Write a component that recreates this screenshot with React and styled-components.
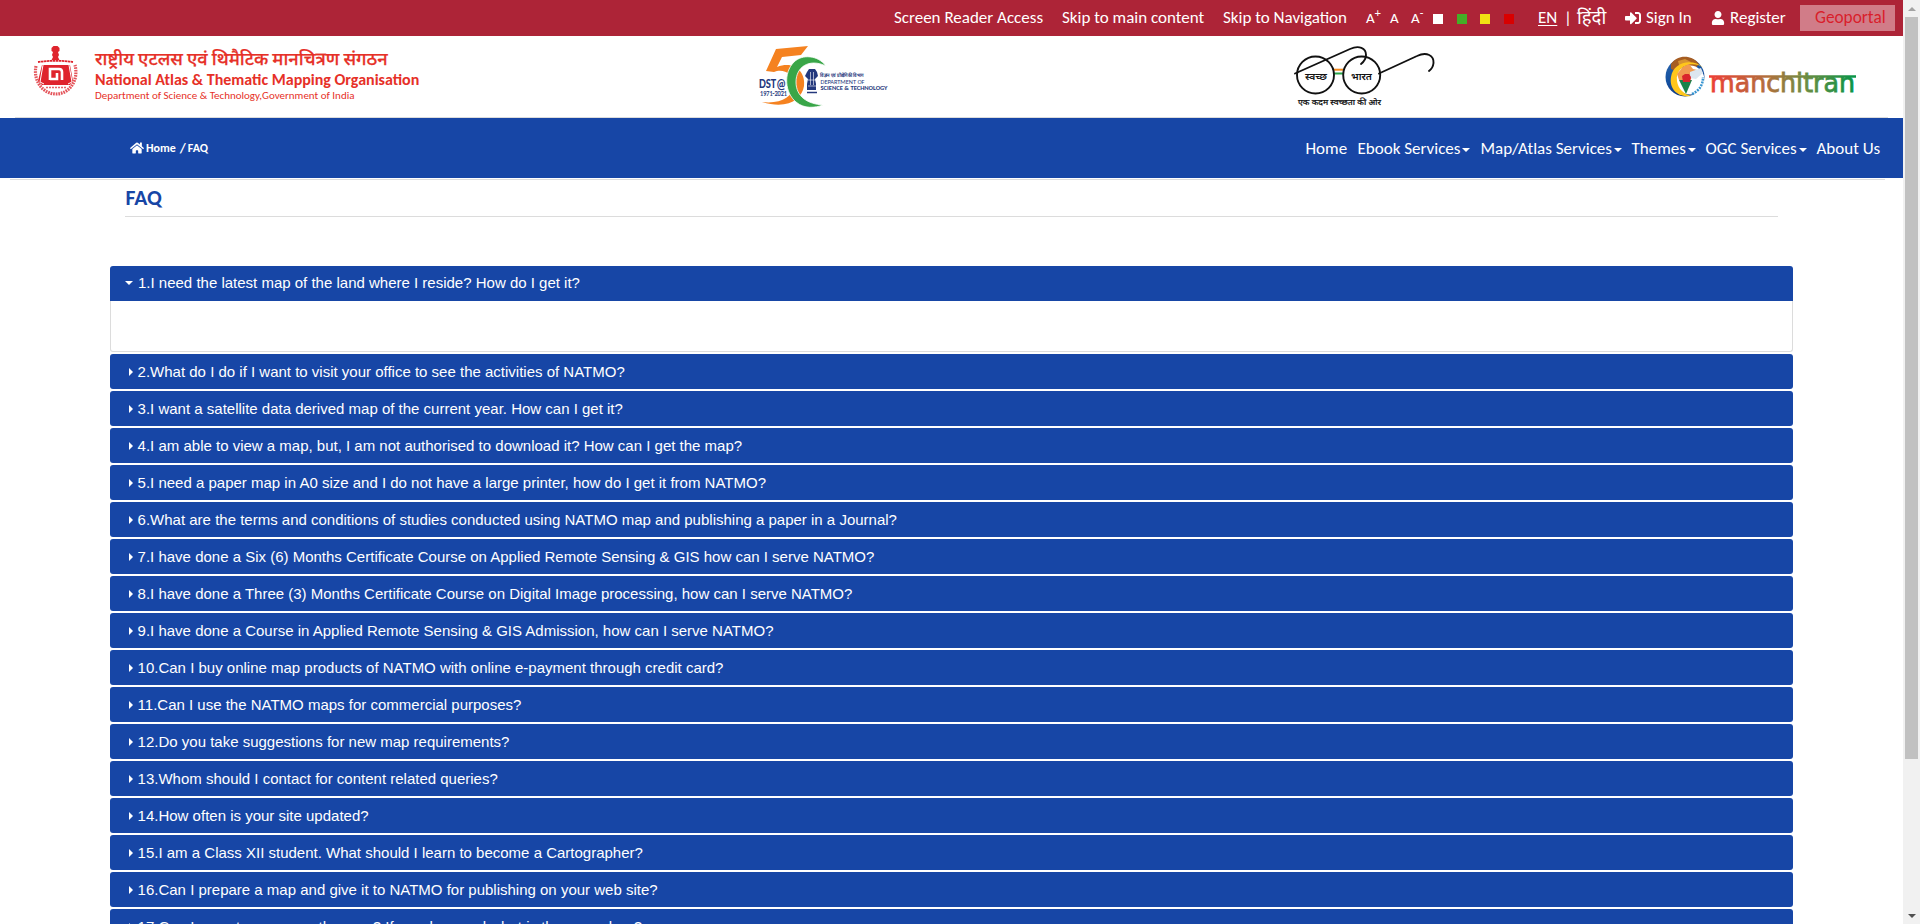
import React from 'react';
import styled, { createGlobalStyle } from 'styled-components';
import { FaHome, FaSignInAlt, FaUser } from 'react-icons/fa';

const BLUE = '#1746a6';
const humanist = `Carlito, Calibri, Lato, 'Noto Sans Devanagari', 'Noto Sans', sans-serif`;

const Global = createGlobalStyle`
  *, *::before, *::after { box-sizing: border-box; }
  body { margin: 0; background: #fff; font-family: ${humanist}; overflow: hidden; }
`;
const Shell = styled.div`
  display: grid;
  grid-template-columns: minmax(0, 1fr) 17px;
  height: 924px;
  overflow: hidden;
`;
const Page = styled.div`
  height: 924px;
  overflow: hidden;
`;
const TopBar = styled.div`
  display: flex;
  align-items: center;
  height: 36px;
  padding-left: 894px;
  background: #ad2437;
  color: #fff;
`;
const TopItem = styled.span`
  display: flex;
  align-items: center;
  flex: none;
  width: ${(p) => p.$w}px;
  font-size: ${(p) => p.$size || 17}px;
  line-height: 24px;
  white-space: nowrap;
  text-decoration: ${(p) => (p.$underline ? 'underline' : 'none')};
  text-underline-offset: 2px;
  svg { flex: none; margin-right: 5px; }
  sup { font-size: 12px; line-height: 10px; margin-top: -11px; }
`;
const Swatch = styled.span`
  flex: none;
  width: 10px;
  height: 10px;
  margin-right: ${(p) => p.$gap}px;
  margin-top: 2px;
  background: ${(p) => p.$color};
`;
const Geoportal = styled.span`
  flex: none;
  width: 95px;
  height: 26px;
  padding-left: 15px;
  background: #d17c88;
  color: #d91e2b;
  font-size: 17.3px;
  line-height: 26px;
`;
const Header = styled.header`
  display: flex;
  height: 82px;
  padding: 0 45px 0 33px;
  > svg { flex: none; margin-left: auto; }
`;
const BrandGroup = styled.div`
  display: flex;
  flex: none;
  width: 723px;
  > svg { flex: none; }
`;
const LogoGroup = styled.div`
  display: flex;
  gap: ${(p) => p.$gap}px;
`;
const Brand = styled.div`
  margin-left: 15px;
  padding-top: 10px;
  color: #e63027;
  white-space: nowrap;
`;
const BrandHindi = styled.div`
  font-size: 18.15px;
  line-height: 26px;
  height: 25px;
  font-weight: 500;
  -webkit-text-stroke: 0.25px #e63027;
`;
const BrandName = styled.div`
  font-size: 16px;
  font-weight: 700;
  line-height: 17px;
`;
const BrandDept = styled.div`
  font-size: 11px;
  line-height: 15px;
`;
const Rule = styled.div`
  height: 1px;
  margin: ${(p) => p.$m};
  background: #dcdcdc;
`;
const NavBar = styled.nav`
  display: flex;
  align-items: center;
  height: 60px;
  padding-left: 130px;
  background: ${BLUE};
  color: #fff;
`;
const Crumb = styled.div`
  display: flex;
  align-items: center;
  width: 1175.500px;
  font-size: 12px;
  font-weight: 700;
  white-space: pre;
  svg { margin-right: 2px; }
`;
const CrumbSlash = styled.span`
  margin: 0 2px 0 4px;
  font-size: 14px;
`;
const CrumbPage = styled.span`
  padding-bottom: 1px;
`;
const NavItem = styled.span`
  display: flex;
  align-items: center;
  flex: none;
  width: ${(p) => p.$w}px;
  font-size: 17px;
  white-space: nowrap;
`;
const Caret = styled.i`
  margin: 3px 0 0 2px;
  border: 4px solid transparent;
  border-top: 4px solid #fff;
  border-bottom: 0;
`;
const Title = styled.h1`
  margin: 0;
  height: 37px;
  padding: 4px 0 0 125.500px;
  color: ${BLUE};
  font-size: 21.6px;
  line-height: 27px;
  font-weight: 700;
`;
const Accordion = styled.div`
  display: flex;
  flex-direction: column;
  gap: 2px;
  margin: 49px 110px 0;
  font-family: 'Liberation Sans', Arial, sans-serif;
`;
const Question = styled.div`
  display: flex;
  align-items: center;
  height: 35px;
  padding: 0 0 ${(p) => (p.$open ? 2 : 0)}px 15px;
  border-radius: ${(p) => (p.$open ? '3px 3px 0 0' : '3px')};
  background: ${BLUE};
  color: #fff;
  font-size: 15px;
  white-space: nowrap;
`;
const Marker = styled.i`
  flex: none;
  width: ${(p) => (p.$open ? 13 : 12.6)}px;
  display: flex;
  padding-left: ${(p) => (p.$open ? 0 : 4)}px;
  &::before {
    content: '';
    border: 4px solid transparent;
    ${(p) => (p.$open
      ? 'border-top-color: #fff; border-bottom: 0;'
      : 'border-left-color: #fff; border-right: 0;')}
  }
`;
const Panel = styled.div`
  height: 51px;
  border: 1px solid #dcdcdc;
  border-top: 0;
  border-radius: 0 0 3px 3px;
`;
const ScrollTrack = styled.div`
  display: flex;
  flex-direction: column;
  align-items: center;
  height: 924px;
  background: #f1f1f1;
`;
const ScrollArrow = styled.i`
  margin: ${(p) => (p.$down ? 'auto 0 6px' : '7px 0 6px')};
  border: 4px solid transparent;
  ${(p) => (p.$down
    ? 'border-top-color: #505050; border-bottom: 0;'
    : 'border-bottom-color: #a3a3a3; border-top: 0;')}
`;
const Thumb = styled.div`
  width: 13px;
  height: 742px;
  background: #c1c1c1;
`;

const questions = [
  '1.I need the latest map of the land where I reside? How do I get it?',
  '2.What do I do if I want to visit your office to see the activities of NATMO?',
  '3.I want a satellite data derived map of the current year. How can I get it?',
  '4.I am able to view a map, but, I am not authorised to download it? How can I get the map?',
  '5.I need a paper map in A0 size and I do not have a large printer, how do I get it from NATMO?',
  '6.What are the terms and conditions of studies conducted using NATMO map and publishing a paper in a Journal?',
  '7.I have done a Six (6) Months Certificate Course on Applied Remote Sensing & GIS how can I serve NATMO?',
  '8.I have done a Three (3) Months Certificate Course on Digital Image processing, how can I serve NATMO?',
  '9.I have done a Course in Applied Remote Sensing & GIS Admission, how can I serve NATMO?',
  '10.Can I buy online map products of NATMO with online e-payment through credit card?',
  '11.Can I use the NATMO maps for commercial purposes?',
  '12.Do you take suggestions for new map requirements?',
  '13.Whom should I contact for content related queries?',
  '14.How often is your site updated?',
  '15.I am a Class XII student. What should I learn to become a Cartographer?',
  '16.Can I prepare a map and give it to NATMO for publishing on your web site?',
  '17.Can I export maps over the map? If yes, how and what is the procedure?',
];

const Emblem = () => (
  <svg width="47" height="82" viewBox="0 0 47 82" fill="none">
    <g fill="#df242d">
      <path d="M18.500 12l2-2h4l2 2v3l-1.500 1 1 3-1 2 1.500 3h-8l1.500-3-1-2 1-3-1.500-1z" />
      <path d="M9 29l28 0 3 16-3 4H9l-4-4z" />
    </g>
    <path d="M5 26q18-2.500 35 0" stroke="#df242d" strokeWidth="1.800" strokeDasharray="2.500 .5" />
    <path d="M10 29l-3 17 4 2M36 29l3 17-4 2" stroke="#fff" />
    <path d="M17 44V33h9q3 0 3 3v8M17 43h7v-6" stroke="#fff" strokeWidth="2.600" />
    <path d="M13 51.500h20" stroke="#e5656a" strokeWidth="1.500" strokeDasharray="2 1" />
    <path d="M3 30c-3 15 7 28 20 28S46 45 42 29" stroke="#e4555b" strokeWidth="3.200" strokeDasharray="1.700 .9" />
  </svg>
);

const DstLogo = () => (
  <svg width="134" height="82" viewBox="756 36 134 82" fill="none">
    <path d="M766 71L776 49L808 46L801 55L782 57L777 67C795 60 806 73 804 86C802 99 788 110 762 102C780 104 793 98 794 84C794 73 782 68 774 72z" fill="#f58220" />
    <path d="M826 66C818 55 802 54 794 62C783 73 785 93 796 102C804 109 815 108 823 105C808 104 796 97 796 82C796 67 809 58 826 66z" fill="#39a648" stroke="#fff" strokeWidth=".8" />
    <g fill="#24387c" fontFamily="Carlito, Calibri, Lato, sans-serif" fontWeight="700">
      <text x="759" y="88" fontSize="13" textLength="27" lengthAdjust="spacingAndGlyphs">DST@</text>
      <text x="760" y="96" fontSize="8" fontWeight="400" stroke="#24387c" strokeWidth=".2" textLength="27" lengthAdjust="spacingAndGlyphs">1971-2021</text>
      <path d="M807 72l2-3h6l2 3 1 4-3 3 1 5v6h-9v-6l1-5-3-3z" />
      <path d="M807 92.500h10" stroke="#24387c" strokeWidth="1.500" />
      <text x="820" y="77" fontSize="5" textLength="44" lengthAdjust="spacingAndGlyphs">विज्ञान एवं प्रौद्योगिकी विभाग</text>
      <text x="820.500" y="84" fontSize="6" fontWeight="400" textLength="44" lengthAdjust="spacingAndGlyphs">DEPARTMENT OF</text>
      <text x="820.500" y="89.800" fontSize="6.200" textLength="67" lengthAdjust="spacingAndGlyphs">SCIENCE &amp; TECHNOLOGY</text>
    </g>
    <path d="M810.500 72v13M813.500 72v13M808 80h8M808 86h8" stroke="#fff" strokeWidth=".6" />
  </svg>
);

const SwachhLogo = () => (
  <svg width="150" height="82" viewBox="1290 36 150 82" fill="none">
    <path d="M1334 69.700h9" stroke="#f58a1f" strokeWidth="2" />
    <path d="M1334 73.500h9" stroke="#2aa349" strokeWidth="2" />
    <g stroke="#111" strokeWidth="1.900" strokeLinecap="round">
      <circle cx="1315.500" cy="75" r="18.500" />
      <circle cx="1361.700" cy="75" r="18.500" />
      <path d="M1295 73.500L1350 49C1359 45 1366 48 1366 55Q1366 60 1361 64" />
      <path d="M1379 73.500L1417 56C1427 51 1434 56 1433.500 63Q1433 68 1429 71" />
    </g>
    <g fill="#111" fontFamily="'Noto Sans Devanagari', 'Noto Sans', sans-serif" fontWeight="600">
      <text x="1305" y="79.500" fontSize="10" textLength="22" lengthAdjust="spacingAndGlyphs">स्वच्छ</text>
      <text x="1351" y="79.500" fontSize="10" textLength="21" lengthAdjust="spacingAndGlyphs">भारत</text>
      <text x="1298" y="105" fontSize="8.500" fontWeight="500" stroke="#111" strokeWidth=".2" textLength="83" lengthAdjust="spacingAndGlyphs">एक कदम स्वच्छता की ओर</text>
    </g>
  </svg>
);

const ManchitranLogo = () => (
  <svg width="195" height="82" viewBox="1663 36 195 82" fill="none">
    <defs>
      <linearGradient id="word" gradientUnits="userSpaceOnUse" x1="1709" y1="0" x2="1856" y2="0">
        <stop stopColor="#ee3e36" /><stop offset=".4" stopColor="#b0703c" />
        <stop offset=".65" stopColor="#6f8c42" /><stop offset="1" stopColor="#079447" />
      </linearGradient>
      <linearGradient id="globe" x1="0" y1="0" x2=".3" y2="1">
        <stop stopColor="#2b66ac" /><stop offset=".6" stopColor="#1450a0" /><stop offset="1" stopColor="#123a80" />
      </linearGradient>
    </defs>
    <circle cx="1685" cy="77" r="19.500" fill="url(#globe)" />
    <path d="M1671 64C1678 54 1692 55 1699 64L1694 70 1684 68 1678 72 1671 69z" fill="#a65d22" />
    <path d="M1678 61l7-2 6 3-5 4-7-1z" fill="#d69331" />
    <circle cx="1690" cy="80" r="14.500" fill="#fff" />
    <path d="M1704 68C1690 59 1675 68 1677 81C1678 89 1684 94 1691 96C1677 98 1669 88 1671 77C1673 63 1691 57 1704 68z" fill="#ffc61b" />
    <path d="M1683 67l6-3 4 5 9 2-4 4-5 1-3 4-11 0-2-6z" fill="#f19b51" />
    <path d="M1690 72l11-4 2 5-7 6-6-1z" fill="#dce6ef" />
    <path d="M1679 80h13l-3 7-3 7-4-8z" fill="#198249" />
    <path d="M1682 76l3-2 4 0 2 3-1 5h-7z" fill="#d9252c" />
    <path d="M1692 94Q1703 89 1703 77" stroke="#3493d0" strokeWidth="2.500" strokeDasharray="2 1" />
    <path d="M1709 76.500H1856" stroke="url(#word)" strokeWidth="2.500" />
    <text x="1710" y="92" fontSize="27" fontWeight="400" fontFamily="'DejaVu Sans', sans-serif" fill="url(#word)" stroke="url(#word)" strokeWidth=".8" textLength="145" lengthAdjust="spacingAndGlyphs">manchitran</text>
  </svg>
);

export default function App() {
  return (
    <Shell>
      <Global />
      <Page>
        <TopBar>
          <TopItem $w={168}>Screen Reader Access</TopItem>
          <TopItem $w={161}>Skip to main content</TopItem>
          <TopItem $w={143}>Skip to Navigation</TopItem>
          <TopItem $w={24} $size={15}>A<sup>+</sup></TopItem>
          <TopItem $w={21} $size={15}>A</TopItem>
          <TopItem $w={22} $size={15}>A<sup>-</sup></TopItem>
          <Swatch $color="#fff" $gap={14} />
          <Swatch $color="#45ad27" $gap={13} />
          <Swatch $color="#f1e113" $gap={14} />
          <Swatch $color="#d90000" $gap={24} />
          <TopItem $w={26} $underline>EN</TopItem>
          <TopItem $w={13}>|</TopItem>
          <TopItem $w={48} $size={18.5}>हिंदी</TopItem>
          <TopItem $w={86}><FaSignInAlt size={16} />Sign In</TopItem>
          <TopItem $w={89}><FaUser size={14} />Register</TopItem>
          <Geoportal>Geoportal</Geoportal>
        </TopBar>
        <Header>
          <BrandGroup>
            <Emblem />
            <Brand>
              <BrandHindi>राष्ट्रीय एटलस एवं थिमैटिक मानचित्रण संगठन</BrandHindi>
              <BrandName>National Atlas &amp; Thematic Mapping Organisation</BrandName>
              <BrandDept>Department of Science &amp; Technology,Government of India</BrandDept>
            </Brand>
          </BrandGroup>
          <LogoGroup $gap={400}>
            <DstLogo />
            <SwachhLogo />
          </LogoGroup>
          <ManchitranLogo />
        </Header>
        <Rule $m="-1px 15px 0" />
        <NavBar>
          <Crumb><FaHome size={14} />Home<CrumbSlash>/</CrumbSlash><CrumbPage>FAQ</CrumbPage></Crumb>
          <NavItem $w={52}>Home</NavItem>
          <NavItem $w={123}>Ebook Services<Caret /></NavItem>
          <NavItem $w={151}>Map/Atlas Services<Caret /></NavItem>
          <NavItem $w={74}>Themes<Caret /></NavItem>
          <NavItem $w={111}>OGC Services<Caret /></NavItem>
          <NavItem $w={70}>About Us</NavItem>
        </NavBar>
        <Rule $m="1px 18px 0 10px" />
        <Title>FAQ</Title>
        <Rule $m="-1px 125px 0" />
        <Accordion>
          {questions.map((q, i) => (
            <div key={q}>
              <Question $open={i === 0}><Marker $open={i === 0} />{q}</Question>
              {i === 0 && <Panel />}
            </div>
          ))}
        </Accordion>
      </Page>
      <ScrollTrack>
        <ScrollArrow />
        <Thumb />
        <ScrollArrow $down />
      </ScrollTrack>
    </Shell>
  );
}
